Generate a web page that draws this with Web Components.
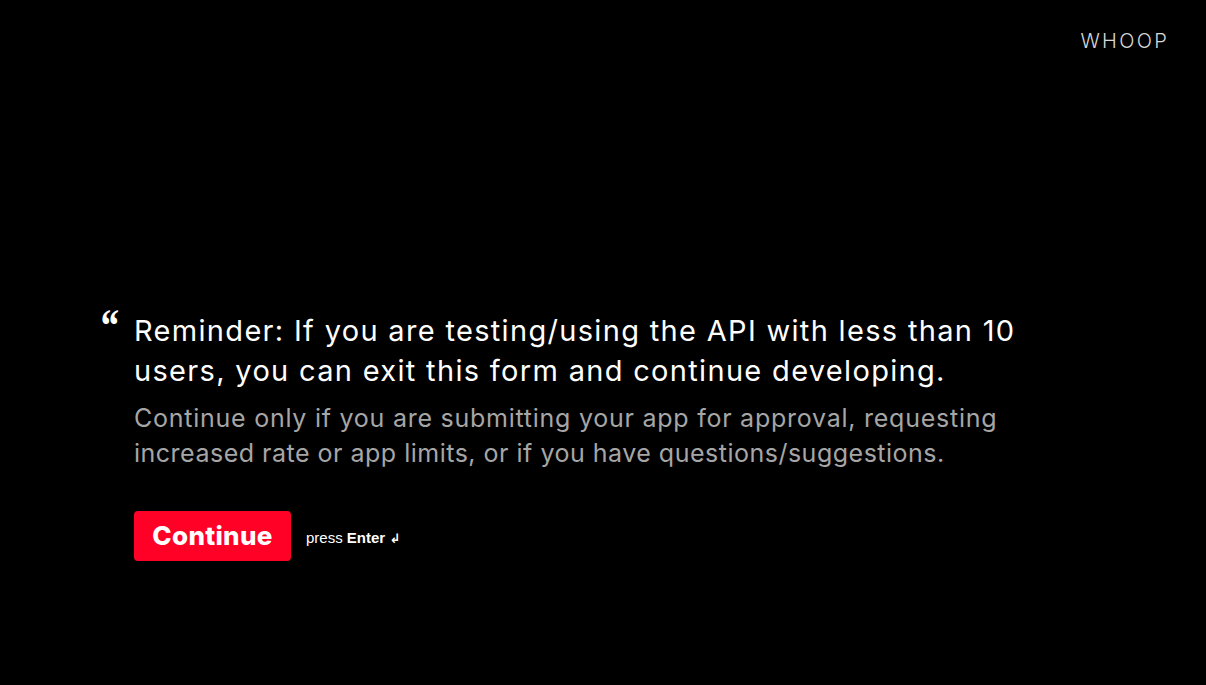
<!DOCTYPE html>
<html>
<head>
<meta charset="utf-8">
<title>WHOOP</title>
<style>
html, body { margin: 0; height: 100%; background: #000; }
</style>
</head>
<body>
<typeform-screen>
  <brand-logo slot="logo">WHOOP</brand-logo>
  <statement-block>
    <span slot="title">Reminder: If you are testing/using the API with less than 10 users, you can exit this form and continue developing.</span>
    <span slot="detail" style="display:block">Continue only if you are submitting your app for approval, requesting</span>
    <span slot="detail" style="display:block;letter-spacing:.5px">increased rate or app limits, or if you have questions/suggestions.</span>
    <continue-action slot="action" label="Continue"></continue-action>
  </statement-block>
</typeform-screen>

<script>
class TypeformScreen extends HTMLElement {
    constructor() {
        super();
        this.attachShadow({ mode: 'open' });
        this.shadowRoot.innerHTML = `
        <style>
        :host {
            display: block;
            position: relative;
            height: 685px;
            overflow: hidden;
            background: #000;
        }
        header {
            display: flex;
            justify-content: flex-end;
            padding: 30px 37px 0 0;
            height: 22px;
        }
        main {
            padding: 255px 0 0 100px;
        }
        </style>
        <header><slot name="logo"></slot></header>
        <main><slot></slot></main>
        `;
    }
}
customElements.define('typeform-screen', TypeformScreen);

class BrandLogo extends HTMLElement {
    constructor() {
        super();
        this.attachShadow({ mode: 'open' });
        this.shadowRoot.innerHTML = `
        <style>
        :host {
            display: block;
            color: #d8d8d8;
            font: 350 20px/22px "Inter", sans-serif;
            letter-spacing: 2.3px;
        }
        </style>
        <slot></slot>
        `;
    }
}
customElements.define('brand-logo', BrandLogo);

class StatementBlock extends HTMLElement {
    constructor() {
        super();
        this.attachShadow({ mode: 'open' });
        this.shadowRoot.innerHTML = `
        <style>
        :host {
            display: flex;
            align-items: flex-start;
            width: 930px;
            font-family: "Inter", sans-serif;
        }
        .mark {
            width: 34px;
            flex: none;
            color: #fff;
            font: italic 700 46px/46px "Liberation Serif", serif;
            margin-top: -4px;
        }
        .mark span {
            display: inline-block;
            transform: translateX(-3px) scaleX(.85);
        }
        .title {
            color: #fff;
            font-size: 29px;
            letter-spacing: 1.32px;
            line-height: 40px;
            padding-top: 4px;
        }
        .detail {
            color: #a6a6a6;
            font-size: 25px;
            letter-spacing: 0.75px;
            line-height: 35px;
            margin-top: 10px;
        }
        .action {
            margin-top: 40px;
        }
        </style>
        <div class="mark"><span>“</span></div>
        <div>
            <div class="title"><slot name="title"></slot></div>
            <div class="detail"><slot name="detail"></slot></div>
            <div class="action"><slot name="action"></slot></div>
        </div>
        `;
    }
}
customElements.define('statement-block', StatementBlock);

class ContinueAction extends HTMLElement {
    constructor() {
        super();
        this.attachShadow({ mode: 'open' });
        this.shadowRoot.innerHTML = `
        <style>
        :host {
            display: flex;
            align-items: center;
            gap: 15px;
        }
        button {
            width: 157px;
            height: 50px;
            padding: 0;
            border: 0;
            border-radius: 4px;
            background: #ff0026;
            color: #fff;
            font: 800 26px/50px "Inter", sans-serif;
            letter-spacing: 0.3px;
            cursor: pointer;
        }
        .hint {
            color: #fff;
            font: 15px/18px "Liberation Sans", sans-serif;
            margin-top: 4px;
        }
        b { font-weight: 700; }
        .enter { font-size: 13px; font-weight: 700; font-family: "DejaVu Sans", sans-serif; }
        </style>
        <button></button>
        <span class="hint">press <b>Enter</b> <span class="enter">↲</span></span>
        `;
    }

    connectedCallback() {
        this.shadowRoot.querySelector('button').textContent = this.getAttribute('label');
    }
}
customElements.define('continue-action', ContinueAction);
</script>
</body>
</html>
